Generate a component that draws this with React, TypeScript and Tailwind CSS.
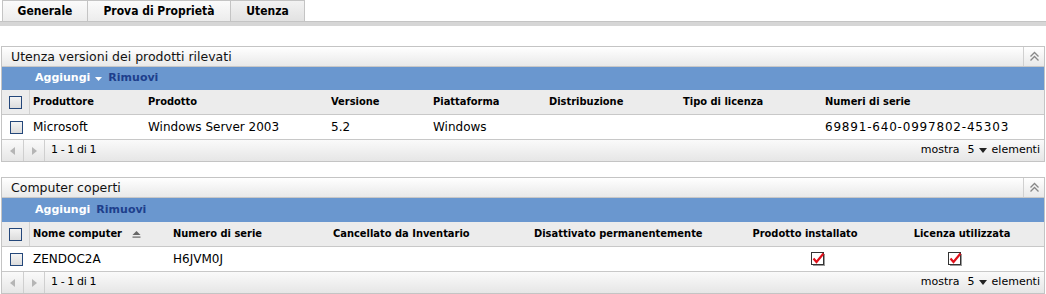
import React from "react";

const font = { fontFamily: '"DejaVu Sans", Verdana, sans-serif' };
const condensed = { fontFamily: '"DejaVu Sans Condensed", "DejaVu Sans", sans-serif' };

function Checkbox() {
  return (
    <span className="inline-block w-[13px] h-[13px] border border-[#24477a] bg-gradient-to-b from-[#f4f4f4] to-[#dcdcdc]" />
  );
}

function CheckedIcon() {
  return (
    <svg width="14" height="14" viewBox="0 0 14 14">
      <rect x="2" y="2" width="12" height="12" fill="#9a9a9a" />
      <rect x="0.5" y="0.5" width="12" height="12" fill="#fff" stroke="#333" />
      <path d="M2.5 6.5 L5.5 10 L12.5 1.5" fill="none" stroke="#e0101a" strokeWidth="2.2" />
    </svg>
  );
}

function CollapseIcon() {
  return (
    <svg width="11" height="11" viewBox="0 0 11 11">
      <path d="M1.5 5.5 L5.5 1.5 L9.5 5.5 M1.5 9.5 L5.5 5.5 L9.5 9.5" fill="none" stroke="#888" strokeWidth="1.3" />
    </svg>
  );
}

function SortIcon() {
  return (
    <svg width="9" height="9" viewBox="0 0 9 9">
      <path d="M0.5 5 L4.5 1 L8.5 5 Z" fill="#666" />
      <rect x="0.5" y="6.5" width="8" height="1.2" fill="#666" />
    </svg>
  );
}

function Pager() {
  return (
    <div className="h-[21px] flex items-center bg-gradient-to-b from-[#fafafa] to-[#e6e6e6] text-[11px] text-black">
      <div className="w-[22px] h-full flex items-center justify-center border-r border-[#cfcfcf]">
        <svg width="5" height="8" viewBox="0 0 5 8"><path d="M5 0 L0 4 L5 8 Z" fill="#b5b5b5" /></svg>
      </div>
      <div className="w-[21px] h-full flex items-center justify-center border-r border-[#cfcfcf]">
        <svg width="5" height="8" viewBox="0 0 5 8"><path d="M0 0 L5 4 L0 8 Z" fill="#b5b5b5" /></svg>
      </div>
      <span className="ml-[6px] tracking-[-0.4px]">1 - 1 di 1</span>
      <span className="ml-auto mr-[4px] flex items-center">
        mostra<span className="ml-[8px]">5</span>
        <svg className="ml-[4px] mr-[5px]" width="8" height="5" viewBox="0 0 8 5"><path d="M0 0 L8 0 L4 5 Z" fill="#222" /></svg>
        elementi
      </span>
    </div>
  );
}

function PanelHeader({ title }: { title: string }) {
  return (
    <div className="h-[20px] flex items-center bg-gradient-to-b from-[#ffffff] to-[#e9e9e9] border-b border-[#c8c8c8]">
      <span className="ml-[9px] pt-[1px] text-[12.5px] text-[#111]">{title}</span>
      <div className="ml-auto w-[21px] h-full flex items-center justify-center border-l border-[#d0d0d0]">
        <CollapseIcon />
      </div>
    </div>
  );
}

type Col = { label: string; w: number; center?: boolean; sort?: boolean; cellPad?: number };

function Table({ cols, row }: { cols: Col[]; row: React.ReactNode[] }) {
  return (
    <div>
      <div
        className="h-[25px] flex items-center bg-[#ececec] border-b border-[#c8c8c8] font-bold text-[11px] text-black"
        style={condensed}
      >
        <div className="w-[28px] h-full flex items-center justify-center border-r border-[#d2d2d2]">
          <Checkbox />
        </div>
        {cols.map((c, i) => (
          <div
            key={i}
            className={`h-full flex items-center ${c.center ? "justify-center" : "pl-[3px]"}`}
            style={{ width: c.w }}
          >
            {c.label}
            {c.sort && <span className="ml-[10px] flex"><SortIcon /></span>}
          </div>
        ))}
      </div>
      <div className="h-[25px] flex items-center bg-white border-b border-[#c8c8c8] text-[12px] text-black">
        <div className="w-[28px] h-full flex items-center justify-center">
          <Checkbox />
        </div>
        {cols.map((c, i) => (
          <div
            key={i}
            className="h-full flex items-center"
            style={{ width: c.w, paddingLeft: c.cellPad ?? 3 }}
          >
            {row[i]}
          </div>
        ))}
      </div>
    </div>
  );
}

export default function App() {
  const cols1: Col[] = [
    { label: "Produttore", w: 115 },
    { label: "Prodotto", w: 183 },
    { label: "Versione", w: 102 },
    { label: "Piattaforma", w: 116 },
    { label: "Distribuzione", w: 134 },
    { label: "Tipo di licenza", w: 142 },
    { label: "Numeri di serie", w: 222 },
  ];
  const cols2: Col[] = [
    { label: "Nome computer", w: 140, sort: true },
    { label: "Numero di serie", w: 160 },
    { label: "Cancellato da Inventario", w: 201 },
    { label: "Disattivato permanentemente", w: 199 },
    { label: "Prodotto installato", w: 150, center: true, cellPad: 81 },
    { label: "Licenza utilizzata", w: 164, center: true, cellPad: 68 },
  ];

  return (
    <div className="w-[1046px] h-[294px] bg-white overflow-hidden" style={font}>
      <div className="flex pl-[3px] h-[22px] border-b border-[#c4c4c4]">
        {["Generale", "Prova di Proprietà", "Utenza"].map((t, i) => (
          <div
            key={t}
            className={`h-full flex items-center justify-center border border-b-0 border-[#c4c4c4] -ml-[1px] font-bold text-[12px] text-black bg-gradient-to-b ${
              i === 2 ? "from-[#f2f2f2] to-[#e2e2e2]" : "from-[#fbfbfb] to-[#ececec]"
            }`}
            style={{ width: [86, 144, 75][i], ...condensed }}
          >
            {t}
          </div>
        ))}
      </div>
      <div className="h-[4px] bg-[#d6d6d6]" />

      <div className="mt-[20px] ml-[1px] w-[1044px] border border-[#c4c4c4]">
        <PanelHeader title="Utenza versioni dei prodotti rilevati" />
        <div className="h-[23px] flex items-center bg-[#6a97cf] text-[11px] font-bold">
          <span className="ml-[33px] text-white">Aggiungi</span>
          <svg className="ml-[5px]" width="7" height="4" viewBox="0 0 7 4"><path d="M0 0 L7 0 L3.5 4 Z" fill="#fff" /></svg>
          <span className="ml-[6px] text-[#1e3f8c]">Rimuovi</span>
        </div>
        <Table
          cols={cols1}
          row={[
            "Microsoft",
            "Windows Server 2003",
            "5.2",
            "Windows",
            "",
            "",
            <span key="s" className="tracking-[0.8px]">69891-640-0997802-45303</span>,
          ]}
        />
        <Pager />
      </div>

      <div className="mt-[15px] ml-[1px] w-[1044px] border border-[#c4c4c4]">
        <PanelHeader title="Computer coperti" />
        <div className="h-[24px] flex items-center bg-[#6a97cf] text-[11px] font-bold">
          <span className="ml-[33px] text-white">Aggiungi</span>
          <span className="ml-[6px] text-[#1e3f8c]">Rimuovi</span>
        </div>
        <Table
          cols={cols2}
          row={["ZENDOC2A", "H6JVM0J", "", "", <CheckedIcon key="a" />, <CheckedIcon key="b" />]}
        />
        <Pager />
      </div>
    </div>
  );
}
